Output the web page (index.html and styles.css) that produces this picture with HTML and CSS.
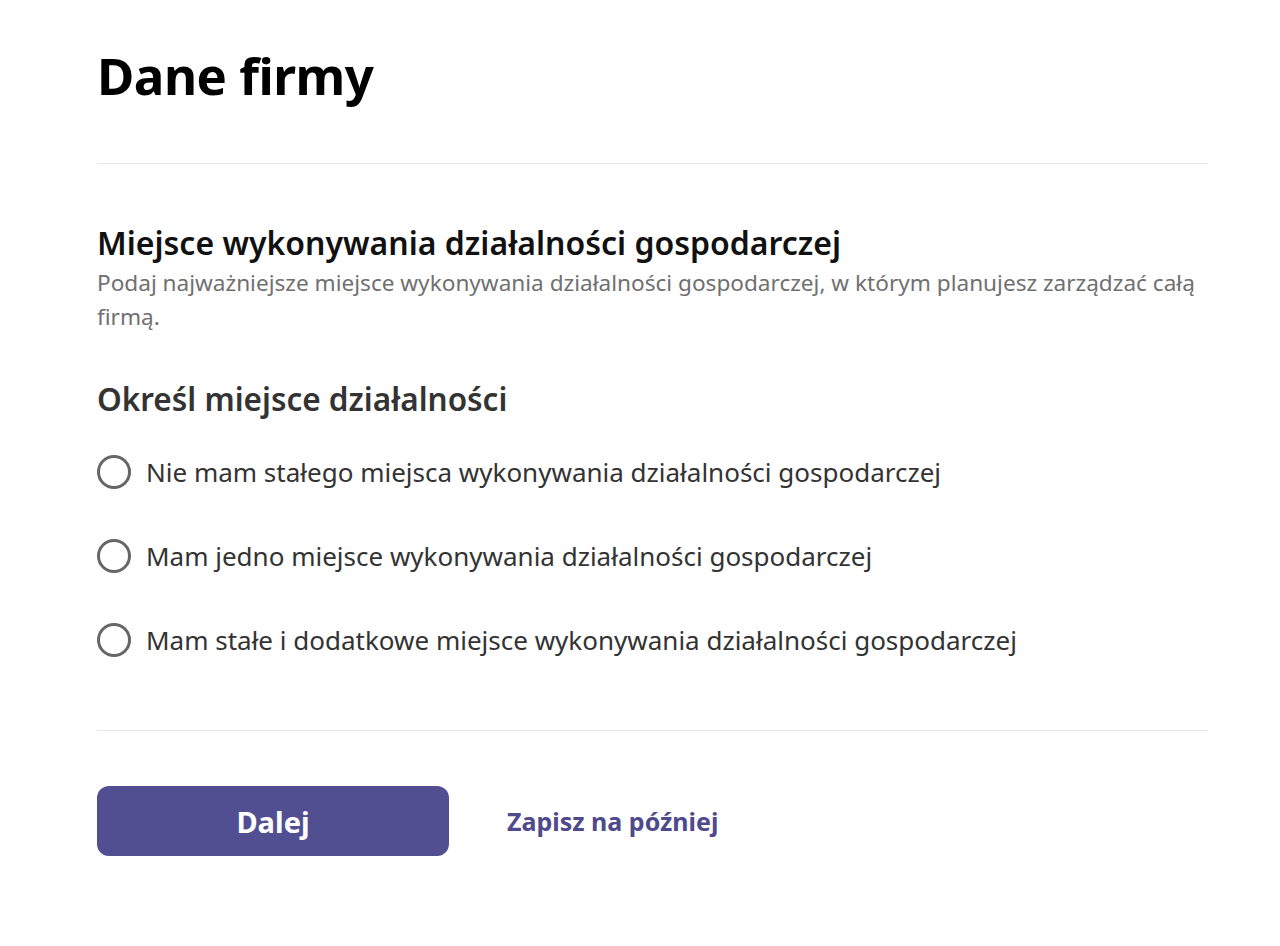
FILE: index.html
```html
<!DOCTYPE html>
<html lang="pl">
<head>
<meta charset="utf-8">
<title>Dane firmy</title>
<link rel="stylesheet" href="styles.css">
</head>
<body>
<main class="page">
  <h1 class="title">Dane firmy</h1>
  <hr class="divider">
  <section class="section">
    <h2 class="section-title">Miejsce wykonywania działalności gospodarczej</h2>
    <p class="section-desc">Podaj najważniejsze miejsce wykonywania działalności gospodarczej, w którym planujesz zarządzać całą firmą.</p>
    <h3 class="group-title">Określ miejsce działalności</h3>
    <div class="radios">
      <label class="radio"><span class="radio-circle"></span><span class="radio-label">Nie mam stałego miejsca wykonywania działalności gospodarczej</span></label>
      <label class="radio"><span class="radio-circle"></span><span class="radio-label">Mam jedno miejsce wykonywania działalności gospodarczej</span></label>
      <label class="radio"><span class="radio-circle"></span><span class="radio-label">Mam stałe i dodatkowe miejsce wykonywania działalności gospodarczej</span></label>
    </div>
  </section>
  <hr class="divider divider-bottom">
  <div class="actions">
    <button class="btn-primary" type="button">Dalej</button>
    <a class="link" href="#">Zapisz na później</a>
  </div>
</main>
</body>
</html>
```

FILE: styles.css
```css
* { box-sizing: border-box; }
html, body { margin: 0; padding: 0; background: #fff; }
body {
  font-family: "Noto Sans", "Open Sans", sans-serif;
  color: #333;
}
.page {
  padding: 40px 72px 0 97px;
  width: 1280px;
}
.title {
  margin: 0;
  font-size: 51px;
  line-height: 70px;
  font-weight: 700;
  color: #000;
  letter-spacing: -0.5px;
}
.divider {
  border: 0;
  border-top: 1px solid #e6e6e6;
  margin: 53px 0 0;
  height: 0;
}
.section { padding-top: 58px; }
.section-title {
  margin: 0;
  font-size: 32px;
  line-height: 42px;
  font-weight: 600;
  color: #111;
}
.section-desc {
  margin: 2px 0 0;
  font-size: 22.6px;
  line-height: 34px;
  color: #707070;
}
.group-title {
  margin: 44px 0 0;
  font-size: 31.5px;
  line-height: 42px;
  font-weight: 600;
  color: #333;
}
.radios {
  display: flex;
  flex-direction: column;
  gap: 44px;
  margin-top: 32px;
}
.radio {
  display: flex;
  align-items: center;
  gap: 15px;
  height: 40px;
}
.radio-circle {
  width: 34px;
  height: 34px;
  border: 3px solid #666;
  border-radius: 50%;
  flex: none;
}
.radio-label {
  font-size: 26px;
  color: #333;
}
.divider-bottom { margin-top: 70px; }
.actions {
  display: flex;
  align-items: center;
  gap: 58px;
  margin-top: 55px;
}
.btn-primary {
  width: 352px;
  height: 70px;
  border: 0;
  border-radius: 12px;
  background: #524e92;
  color: #fff;
  font-family: inherit;
  font-size: 29px;
  font-weight: 700;
}
.link {
  color: #4f4a8c;
  font-size: 25px;
  font-weight: 700;
  text-decoration: none;
}
```
